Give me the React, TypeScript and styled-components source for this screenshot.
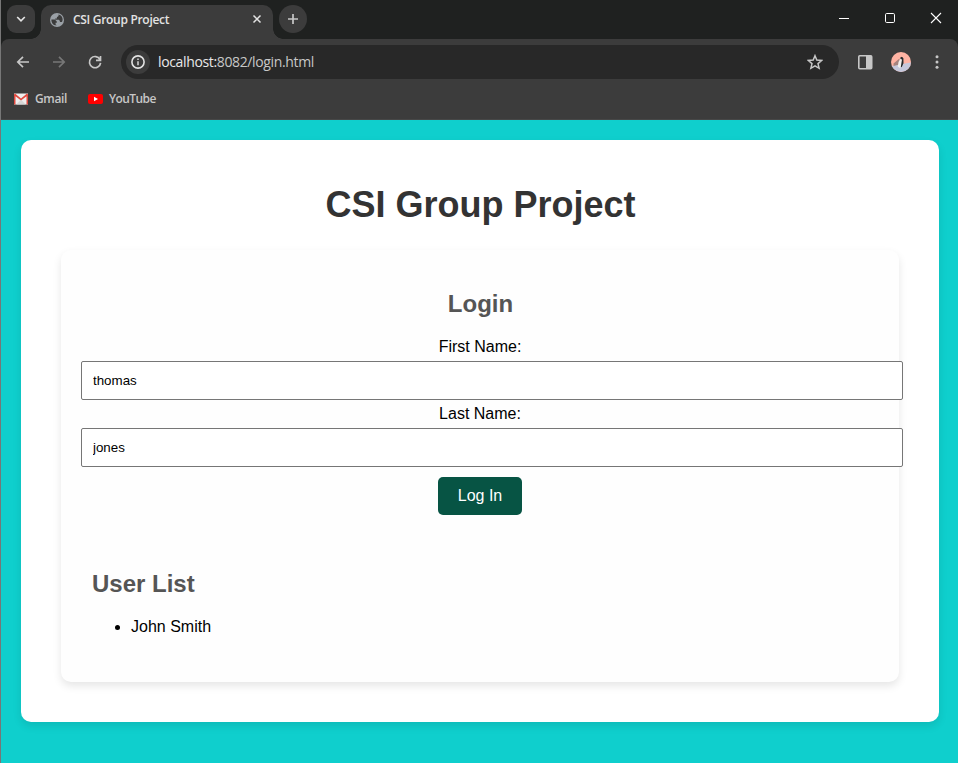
import React from "react";
import styled, { createGlobalStyle } from "styled-components";

const GlobalStyle = createGlobalStyle`
  * { box-sizing: border-box; }
  body { margin: 0; overflow: hidden; background: #0fcfcd; }
`;

const Window = styled.div`
  width: 958px;
  height: 763px;
  display: flex;
  flex-direction: column;
  border-left: 1px solid #777777;
  overflow: hidden;
  background: #0fcfcd;
  font-family: "Liberation Sans", Arial, sans-serif;
`;

const TabStrip = styled.div`
  height: 39px;
  flex: none;
  display: flex;
  align-items: flex-start;
  padding: 5px 0 0 6px;
  background: #1f2120;
  font-family: "Open Sans", "Noto Sans", sans-serif;
`;

const StripButton = styled.button<{ $round?: boolean }>`
  width: 28px;
  height: 28px;
  padding: 0;
  border: 0;
  display: grid;
  place-items: center;
  color: #e3e3e3;
  background: #3c3c3c;
  border-radius: ${(p) => (p.$round ? "50%" : "9px")};
`;

const Tab = styled.div`
  position: relative;
  width: 232px;
  height: 34px;
  margin: 0 6px;
  padding: 0 10px 5px 9px;
  display: flex;
  align-items: center;
  color: #e3e3e3;
  background: #3c3c3c;
  border-radius: 10px 10px 0 0;

  &::before,
  &::after {
    content: "";
    position: absolute;
    bottom: 0;
    width: 10px;
    height: 10px;
  }
  &::before {
    left: -10px;
    background: radial-gradient(circle at 0 0, transparent 9.5px, #3c3c3c 10px);
  }
  &::after {
    right: -10px;
    background: radial-gradient(circle at 100% 0, transparent 9.5px, #3c3c3c 10px);
  }
`;

const TabTitle = styled.span`
  flex: 1;
  margin-left: 9px;
  font-size: 12px;
  line-height: 16px;
  font-weight: 600;
  letter-spacing: -0.3px;
  white-space: nowrap;
`;

const WindowControls = styled.div`
  display: flex;
  gap: 34px;
  margin-left: auto;
  padding: 7px 16px 0 0;
  color: #ffffff;
`;

const ToolbarArea = styled.div`
  height: 81px;
  flex: none;
  background: #1f2120;
  font-family: "Open Sans", "Noto Sans", sans-serif;
`;

const ToolbarSurface = styled.div`
  height: 100%;
  background: #3c3c3c;
  border-radius: 8px 8px 0 0;
  border-bottom: 1px solid #474747;
`;

const NavRow = styled.div`
  height: 46px;
  display: flex;
  align-items: center;
  padding: 0 13px 0 14px;
  color: #c7c7c7;
`;

const NavIcons = styled.div`
  width: 106px;
  display: flex;
  gap: 20px;
`;

const AddressBar = styled.div`
  width: 718px;
  height: 34px;
  padding: 0 16px 0 5px;
  display: flex;
  align-items: center;
  border-radius: 17px;
  background: #282828;
`;

const SiteInfo = styled.span`
  width: 24px;
  height: 24px;
  display: grid;
  place-items: center;
  border-radius: 50%;
  background: #3c3c3c;
  color: #e3e3e3;
`;

const Address = styled.span`
  flex: 1;
  margin-left: 8px;
  font-size: 14px;
  line-height: 20px;
  letter-spacing: -0.36px;
  color: #c7c7c7;
`;

const Host = styled.span`
  color: #e9e9e9;
`;

const ToolIcons = styled.div`
  display: flex;
  align-items: center;
  justify-content: space-between;
  flex: 1;
  margin-left: 18px;
`;

const Bookmarks = styled.div`
  display: flex;
  height: 27px;
  align-items: center;
  gap: 21px;
  padding-left: 12px;
`;

const Bookmark = styled.span<{ $spacing: string }>`
  display: flex;
  align-items: center;
  gap: 6px;
  color: #c7c7c7;
  font-size: 12px;
  line-height: 16px;
  font-weight: 600;
  letter-spacing: ${(p) => p.$spacing};
`;

const Page = styled.main`
  flex: 1;
  padding: 20px 19px 0 20px;
`;

const Container = styled.section`
  height: 582px;
  padding: 40px;
  background: #ffffff;
  border-radius: 10px;
  box-shadow: 0 4px 8px rgba(0, 0, 0, 0.1);
  text-align: center;
`;

const Title = styled.h1`
  margin: 4px 0 25px;
  padding-left: 1px;
  font-size: 36px;
  line-height: 41px;
  color: #333333;
`;

const Panel = styled.div`
  height: 432px;
  padding: 40px 20px 0;
  background: #fefefe;
  border-radius: 10px;
  box-shadow: 0 4px 8px rgba(0, 0, 0, 0.1);
`;

const Heading = styled.h2`
  margin: 0;
  padding-left: 1px;
  font-size: 24px;
  line-height: 28px;
  color: #555555;
`;

const LoginForm = styled.form`
  margin-top: 19px;
`;

const Label = styled.label`
  display: block;
  height: 24px;
  padding-top: 1px;
  font-size: 16px;
  line-height: 18px;
  color: #000000;
`;

const Input = styled.input`
  display: block;
  width: calc(100% + 24px);
  height: 39px;
  margin-bottom: 4px;
  padding: 0 11px;
  border: 1px solid #767676;
  border-radius: 2px;
  background: #ffffff;
  outline: 0;
  color: #000000;
  font: 13.333px "Liberation Sans", Arial, sans-serif;
`;

const Submit = styled.button`
  width: 84px;
  height: 38px;
  margin-top: 6px;
  padding: 0;
  border: 0;
  border-radius: 5px;
  background: #075444;
  color: #ffffff;
  font: 16px "Liberation Sans", Arial, sans-serif;
`;

const UserSection = styled.section`
  margin-top: 55px;
  padding-left: 10px;
  text-align: left;
`;

const Users = styled.ul`
  margin: 19px 0 0;
  padding-left: 40px;
  font-size: 16px;
  line-height: 20px;
`;

const Stroke = ({ w, h, d, sw = 1.7, color = "currentColor" }: { w: number; h: number; d: string; sw?: number; color?: string }) => (
  <svg width={w} height={h} viewBox={`0 0 ${w} ${h}`} fill="none" stroke={color} strokeWidth={sw}>
    <path d={d} />
  </svg>
);

const GlobeIcon = () => (
  <svg width="14" height="14" viewBox="0 0 14 14">
    <circle cx="7" cy="7" r="7" fill="#9aa0a6" />
    <path d="M1.4 6.4h3.4l2 2v1.4H5.6v1.6l1.2.9C3.5 12.6 1.2 9.8 1.4 6.4Z" fill="#3c3c3c" />
    <path d="M8.5 1.6v1.5L6.9 4.2v1.3H5.2v1.2h3.7l1 1.2v1.2h2c.7-1.2 1-2.8.4-4.4C11.7 3.1 10.3 2 8.5 1.6Z" fill="#3c3c3c" />
  </svg>
);

const InfoIcon = () => (
  <svg width="14" height="14" viewBox="0 0 14 14">
    <circle cx="7" cy="7" r="6.1" fill="none" stroke="currentColor" strokeWidth="1.6" />
    <path d="M6.3 6.2h1.4v4H6.3zM6.3 3.6h1.4V5H6.3z" fill="currentColor" />
  </svg>
);

const SidePanelIcon = () => (
  <svg width="16" height="16" viewBox="0 0 16 16">
    <rect x="1.8" y="1.8" width="12.9" height="12.9" rx="1" fill="none" stroke="currentColor" strokeWidth="1.6" />
    <path d="M9 1.8h5.7v12.9H9z" fill="currentColor" />
  </svg>
);

const Avatar = () => (
  <svg width="20" height="20" viewBox="0 0 20 20">
    <defs>
      <clipPath id="avatar-clip"><circle cx="10" cy="10" r="10" /></clipPath>
    </defs>
    <g clipPath="url(#avatar-clip)">
      <path fill="#ffb3a3" d="M0 0h20v20H0z" />
      <path fill="#c5c8dc" d="M0 14 8 12.5l12-2V20H0z" />
      <path fill="#a6837e" d="m2.5 11.5 6-5v6l-6 1.5z" />
      <path fill="#f2efed" d="M10 6 7.5 10 6.8 14.5l2 1.5 2-2L12 8z" />
      <path fill="#282a2c" d="M9.3 5.5 11 4.7l1.4 1.5.1 5-1.8 4-.9-.4.7-4.3.5-3L9.5 7z" />
    </g>
  </svg>
);

const MenuIcon = () => (
  <svg width="16" height="16" viewBox="0 0 16 16" fill="currentColor">
    <circle cx="8" cy="2.7" r="1.5" />
    <circle cx="8" cy="8" r="1.5" />
    <circle cx="8" cy="13.3" r="1.5" />
  </svg>
);

const GmailIcon = () => (
  <svg width="16" height="12" viewBox="0 0 16 12">
    <path d="M1 .5h14v11H1z" fill="#eeeeee" />
    <path d="m3.2 11.5 4-4h1.6l4 4z" fill="#d5d5d5" />
    <path d="M1 11.5h1.5V3.3L8 7.6l5.5-4.3v8.2H15V1.4L14 .5 8 5.4 2 .5 1 1.4z" fill="#e0483e" />
  </svg>
);

const YouTubeIcon = () => (
  <svg width="15" height="10" viewBox="0 0 15 10">
    <rect width="15" height="10" rx="2" fill="#ff0000" />
    <path d="m6 2.8 4 2.2-4 2.2z" fill="#fff" />
  </svg>
);

export default function App() {
  return (
    <>
      <GlobalStyle />
      <Window>
        <TabStrip>
          <StripButton aria-label="Search tabs">
            <Stroke w={12} h={12} d="M2.2 4 6 7.8 9.8 4" />
          </StripButton>
          <Tab>
            <GlobeIcon />
            <TabTitle>CSI Group Project</TabTitle>
            <Stroke w={12} h={12} d="m2.5 1.5 7 7m0-7-7 7" sw={1.5} />
          </Tab>
          <StripButton $round aria-label="New tab">
            <Stroke w={12} h={12} d="M6 1v10M1 6h10" color="#c7c7c7" />
          </StripButton>
          <WindowControls>
            <Stroke w={12} h={12} d="M1 6.5h10" sw={1} />
            <svg width="12" height="12" viewBox="0 0 12 12" fill="none" stroke="currentColor">
              <rect x="1.5" y="1.5" width="9" height="9" rx="1.2" />
            </svg>
            <Stroke w={12} h={12} d="m1 1 10 10M11 1 1 11" sw={1.1} />
          </WindowControls>
        </TabStrip>

        <ToolbarArea>
          <ToolbarSurface>
            <NavRow>
              <NavIcons>
                <Stroke w={16} h={16} d="M14 8H3M8 2.8 2.8 8 8 13.2" />
                <Stroke w={16} h={16} d="M2 8h11M8 2.8 13.2 8 8 13.2" color="#777777" />
                <Stroke w={16} h={16} d="M13 5.5A5.6 5.6 0 1 0 13.6 8.8M13.5 2v4.4H9" />
              </NavIcons>
              <AddressBar>
                <SiteInfo><InfoIcon /></SiteInfo>
                <Address><Host>localhost:</Host>8082/login.html</Address>
                <Stroke w={16} h={16} sw={1.5} d="m8 1.7 1.8 4.4 4.8.4-3.6 3.1 1.1 4.7L8 11.8l-4.1 2.5L5 9.6 1.4 6.5l4.8-.4z" />
              </AddressBar>
              <ToolIcons>
                <SidePanelIcon />
                <Avatar />
                <MenuIcon />
              </ToolIcons>
            </NavRow>
            <Bookmarks>
              <Bookmark $spacing="-0.35px"><GmailIcon />Gmail</Bookmark>
              <Bookmark $spacing="-0.6px"><YouTubeIcon />YouTube</Bookmark>
            </Bookmarks>
          </ToolbarSurface>
        </ToolbarArea>

        <Page>
          <Container>
            <Title>CSI Group Project</Title>
            <Panel>
              <Heading>Login</Heading>
              <LoginForm onSubmit={(e) => e.preventDefault()}>
                <Label htmlFor="first-name">First Name:</Label>
                <Input id="first-name" defaultValue="thomas" />
                <Label htmlFor="last-name">Last Name:</Label>
                <Input id="last-name" defaultValue="jones" />
                <Submit type="submit">Log In</Submit>
              </LoginForm>
              <UserSection>
                <Heading>User List</Heading>
                <Users>
                  <li>John Smith</li>
                </Users>
              </UserSection>
            </Panel>
          </Container>
        </Page>
      </Window>
    </>
  );
}
